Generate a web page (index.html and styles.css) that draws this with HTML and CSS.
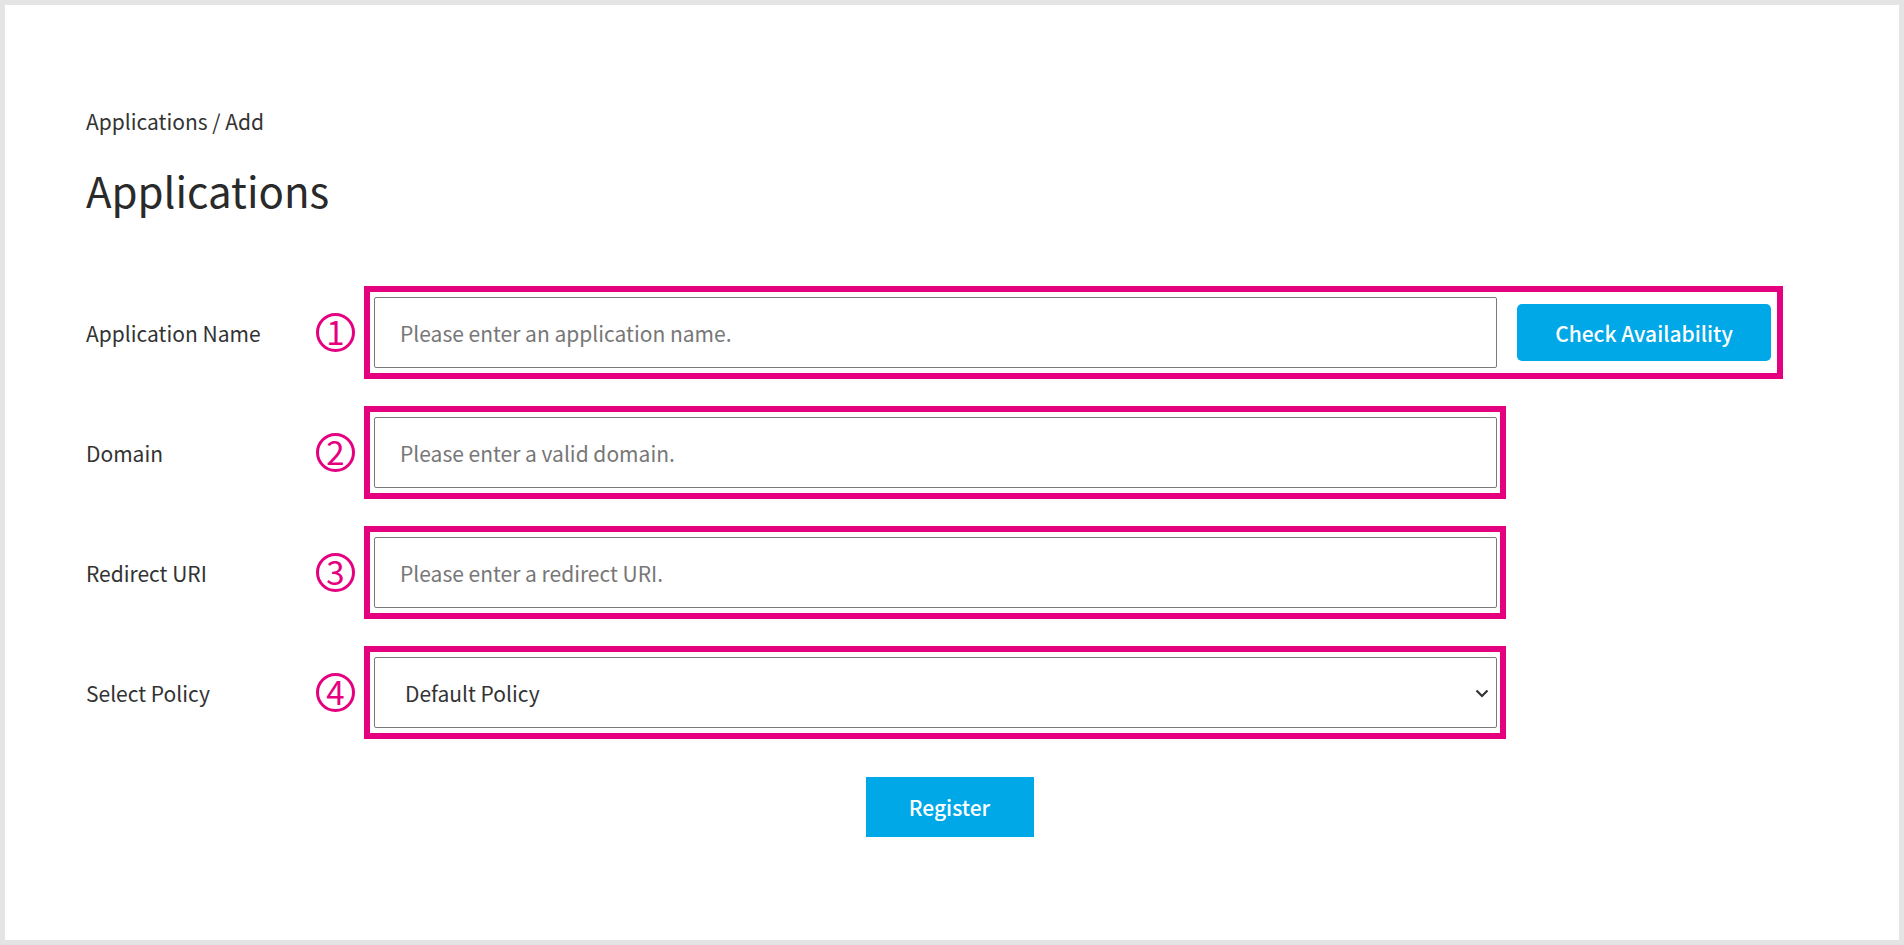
FILE: index.html
```html
<!DOCTYPE html>
<html lang="en">
<head>
<meta charset="utf-8">
<title>Applications / Add</title>
<link rel="stylesheet" href="styles.css">
</head>
<body>
<div class="page">
  <nav class="breadcrumb">Applications / Add</nav>
  <h1 class="title">Applications</h1>
  <form class="form">
    <div class="row">
      <label class="label" for="appname">Application Name</label>
      <span class="num">1</span>
      <div class="mark">
        <input class="field" id="appname" type="text" placeholder="Please enter an application name.">
        <button type="button" class="btn-check">Check Availability</button>
      </div>
    </div>
    <div class="row">
      <label class="label" for="domain">Domain</label>
      <span class="num">2</span>
      <div class="mark">
        <input class="field" id="domain" type="text" placeholder="Please enter a valid domain.">
      </div>
    </div>
    <div class="row">
      <label class="label" for="redirect">Redirect URI</label>
      <span class="num">3</span>
      <div class="mark">
        <input class="field" id="redirect" type="text" placeholder="Please enter a redirect URI.">
      </div>
    </div>
    <div class="row">
      <label class="label" for="policy">Select Policy</label>
      <span class="num">4</span>
      <div class="mark">
        <div class="select-wrap">
          <select class="field select" id="policy">
            <option>Default Policy</option>
          </select>
          <svg class="chev" width="14" height="9" viewBox="0 0 14 9"><path d="M1.5 1.5 L7 7 L12.5 1.5" fill="none" stroke="#333" stroke-width="2.2"/></svg>
        </div>
      </div>
    </div>
    <div class="actions">
      <button type="button" class="btn-register">Register</button>
    </div>
  </form>
</div>
</body>
</html>
```
FILE: styles.css
```css
* { box-sizing: border-box; }
html, body { margin: 0; padding: 0; }
body {
  background: #e4e4e4;
  padding: 5px;
  font-family: "Noto Sans CJK JP", "Noto Sans", sans-serif;
  color: #333;
}
.page {
  background: #fff;
  height: 935px;
  padding: 0 81px;
}
.breadcrumb {
  padding-top: 102px;
  font-size: 21px;
  line-height: 28px;
  color: #333;
}
.title {
  margin: 27px 0 0;
  font-size: 42px;
  font-weight: 400;
  line-height: 56px;
  color: #2a2a2a;
}
.form {
  margin-top: 68px;
  display: flex;
  flex-direction: column;
  gap: 27px;
}
.row {
  display: flex;
  align-items: center;
}
.label {
  width: 230px;
  font-size: 21px;
  color: #333;
}
.num {
  width: 39px;
  height: 39px;
  border: 3.4px solid #e4007f;
  border-radius: 50%;
  color: #e4007f;
  font-size: 33px;
  line-height: 31px;
  text-align: center;
  margin-right: 9px;
}
.mark {
  display: flex;
  align-items: center;
  border: 6px solid #e4007f;
  padding: 5px 3px 5px 4px;
}
.mark .btn-check { margin: 0 3px 0 20px; }
.field {
  width: 1123px;
  height: 71px;
  border: 1px solid #7a7a7a;
  border-radius: 2px;
  padding: 0 25px;
  font-family: inherit;
  font-size: 21px;
  color: #333;
  background: #fff;
  outline: none;
}
.field::placeholder { color: #777; }
.select-wrap { position: relative; }
.select {
  appearance: none;
  -webkit-appearance: none;
  padding-left: 30px;
}
.chev {
  position: absolute;
  right: 8px;
  top: 32px;
}
.btn-check {
  width: 254px;
  height: 57px;
  border: 0;
  border-radius: 5px;
  background: #00a8e8;
  color: #fff;
  font-family: inherit;
  font-size: 21px;
  font-weight: 500;
}
.actions {
  display: flex;
  justify-content: center;
  margin-top: 11px;
  padding-right: 5px;
}
.btn-register {
  width: 168px;
  height: 60px;
  border: 0;
  background: #00a8e8;
  color: #fff;
  font-family: inherit;
  font-size: 21px;
  font-weight: 500;
}
```
